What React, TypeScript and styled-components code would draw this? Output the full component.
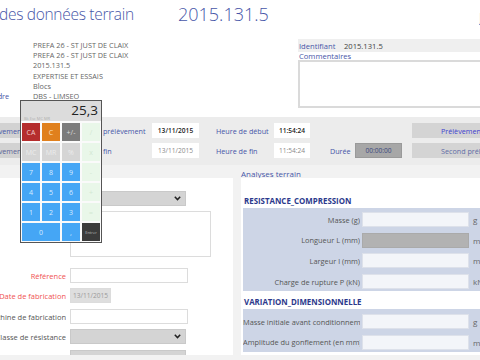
import React from "react";
import styled, { createGlobalStyle } from "styled-components";

const GlobalStyle = createGlobalStyle`
  html, body { margin: 0; padding: 0; background: #fff; }
  body { font-family: "Open Sans", "Noto Sans", sans-serif; }
  * { box-sizing: border-box; }
`;

const BLUE = "#4756a8";
const RED = "#f05252";

const Page = styled.div`
  position: relative;
  width: 480px;
  height: 360px;
  overflow: hidden;
  background: #f2f2f2;
  display: flex;
  flex-direction: column;
`;

const Top = styled.div`
  background: #fff;
  height: 117px;
  display: flex;
  flex-direction: column;
`;

const TitleRow = styled.div`
  height: 36px;
  display: flex;
  align-items: flex-start;
  padding-top: 2px;
  color: ${BLUE};
  font-weight: 300;
  font-size: 18px;
  line-height: 24px;
  white-space: nowrap;
`;

const Title = styled.h1`
  margin: 0 0 0 -1px;
  width: 179px;
  font: inherit;
  font-size: 15.5px;
  letter-spacing: -0.3px;
`;

const TitleNum = styled.span`
  flex: 1;
`;

const Corner = styled.span`
  width: 1px;
  overflow: hidden;
  font-size: 12px;
  padding-top: 4px;
  color: #3b4a9a;
`;

const InfoArea = styled.div`
  flex: 1;
  display: flex;
`;

const InfoLeft = styled.div`
  width: 298px;
  display: grid;
  grid-template-columns: 33px 1fr;
  grid-auto-rows: 10.2px;
  padding-top: 4px;
  font-size: 7.3px;
  line-height: 10.2px;
  color: #666;
  white-space: nowrap;
`;

const InfoLabel = styled.span`
  color: ${BLUE};
  margin-left: -11px;
`;

const InfoRight = styled.div`
  flex: 1;
  padding-top: 3px;
  font-size: 7.6px;
`;

const IdRow = styled.div`
  height: 13px;
  background: #efefef;
  display: flex;
  align-items: center;
`;

const IdLabel = styled.span`
  width: 46px;
  padding-left: 1px;
  color: ${BLUE};
`;

const IdValue = styled.span`
  color: #444;
`;

const CommentLabel = styled.div`
  height: 8px;
  line-height: 8px;
  padding-left: 1px;
  color: ${BLUE};
`;

const CommentBox = styled.div`
  height: 48px;
  margin-right: -10px;
  border: 2px solid #dadada;
  background: #fff;
`;

const Band = styled.div`
  height: 48px;
  background: #ececec;
  padding-top: 6px;
  display: flex;
  flex-direction: column;
  gap: 5px;
`;

const BandRow = styled.div`
  height: 15px;
  display: grid;
  grid-template-columns: 75px 77px 47px 75px 36px 45px 47px 110px;
  align-items: center;
  font-size: 7.2px;
  white-space: nowrap;
`;

const SideButton = styled.div<{ $color: string }>`
  width: 60px;
  height: 15px;
  background: #d2d2d2;
  color: ${(p) => p.$color};
  display: flex;
  align-items: center;
  justify-content: flex-end;
  padding-right: 36px;
  overflow: hidden;
`;

const BandLabel = styled.span<{ $pad?: number }>`
  color: ${BLUE};
  padding-left: ${(p) => p.$pad ?? 0}px;
`;

const ValueBox = styled.div<{ $dim?: boolean; $dark?: boolean }>`
  height: 15px;
  background: ${(p) => (p.$dark ? "#a7a7a7" : "#fff")};
  border: ${(p) => (p.$dark ? "1px solid #9a9a9a" : "none")};
  color: ${(p) => (p.$dark ? "#3b4880" : p.$dim ? "#8a8a8a" : "#1a1a1a")};
  font-weight: ${(p) => (p.$dim || p.$dark ? 400 : 600)};
  display: flex;
  align-items: center;
  justify-content: center;
  font-size: 6.6px;
`;

const RightButton = styled.div<{ $color: string }>`
  height: 15px;
  margin-left: 10px;
  background: #d4d4d4;
  color: ${(p) => p.$color};
  display: flex;
  align-items: center;
  padding-left: 29px;
`;

const Lower = styled.div`
  flex: 1;
  display: grid;
  grid-template-columns: 233px 1fr;
  grid-template-rows: 13px 177px;
  column-gap: 8px;
`;

const PanelTitle = styled.div`
  grid-column: 2;
  grid-row: 1;
  font-size: 8px;
  line-height: 13px;
  padding-top: 2px;
  color: ${BLUE};
`;

const LeftPanel = styled.div`
  grid-column: 1;
  grid-row: 2;
  background: #fff;
  padding-top: 13px;
  display: flex;
  flex-direction: column;
  overflow: hidden;
`;

const FormRow = styled.div<{ $top: number }>`
  display: flex;
  align-items: center;
  margin-top: ${(p) => p.$top}px;
  flex-shrink: 0;
`;

const FieldLabel = styled.span<{ $color?: string }>`
  width: 66px;
  flex-shrink: 0;
  margin-right: 4px;
  text-align: right;
  white-space: nowrap;
  direction: rtl;
  overflow: hidden;
  font-size: 7.5px;
  color: ${(p) => p.$color ?? "#555"};
`;

const Select = styled.div<{ $w: number }>`
  width: ${(p) => p.$w}px;
  flex-shrink: 0;
  height: 15px;
  background: #d4d4d4;
  border: 1px solid #c9c9c9;
  display: flex;
  align-items: center;
  justify-content: flex-end;
  padding-right: 4px;
`;

const Input = styled.div<{ $w: number; $h?: number; $bg?: string }>`
  width: ${(p) => p.$w}px;
  flex-shrink: 0;
  height: ${(p) => p.$h ?? 15}px;
  background: ${(p) => p.$bg ?? "#fff"};
  border: 1px solid #dcdcdc;
  font-size: 6.6px;
  color: #9a9a9a;
  display: flex;
  align-items: center;
  justify-content: center;
`;

const RightPanel = styled.div`
  grid-column: 2;
  grid-row: 2;
  background: #fff;
  padding-left: 2px;
  overflow: hidden;
`;

const SectionTitle = styled.div<{ $h: number }>`
  height: ${(p) => p.$h}px;
  display: flex;
  align-items: flex-end;
  padding: 0 0 1px 1px;
  font-size: 7.9px;
  line-height: 12px;
  font-weight: 700;
  color: #2c3a8c;
`;

const SectionBody = styled.div<{ $pad: number }>`
  background: #cdd5e6;
  padding: ${(p) => p.$pad}px 0 2px;
  display: flex;
  flex-direction: column;
  gap: 5.7px;
`;

const DataRow = styled.div`
  height: 15px;
  display: flex;
  align-items: center;
  white-space: nowrap;
  font-size: 7.4px;
  color: #555;
`;

const DataLabel = styled.span`
  width: 117px;
  flex-shrink: 0;
  text-align: right;
  overflow: hidden;
`;

const DataInput = styled.div<{ $gray?: boolean }>`
  width: 107px;
  flex-shrink: 0;
  height: 15px;
  margin-left: 2px;
  background: ${(p) => (p.$gray ? "#b2b2b2" : "#f3f5f9")};
  border: 1px solid ${(p) => (p.$gray ? "#aaa" : "#dde1ea")};
`;

const Unit = styled.span`
  flex-shrink: 0;
  margin-left: 4px;
  color: #666;
  font-size: 8px;
`;

const Calc = styled.div`
  position: absolute;
  left: 20px;
  top: 100px;
  width: 82px;
  height: 143px;
  border: 1px solid #555;
  background: #fafafa;
`;

const CalcDisplay = styled.div`
  position: relative;
  height: 20px;
  background: #dcdcdc;
  font-size: 13.5px;
  line-height: 19px;
  text-align: right;
  padding-right: 3px;
  color: #222;
`;

const CalcHint = styled.span`
  position: absolute;
  left: 3px;
  bottom: 0px;
  font-size: 4px;
  line-height: 5px;
  color: #b0b0b0;
`;

const KeyGrid = styled.div`
  display: grid;
  grid-template-columns: repeat(4, 18px);
  grid-auto-rows: 18px;
  gap: 2px;
  padding: 2px 1px 1px;
`;

const Key = styled.div<{ $bg: string; $fg: string; $span?: number; $small?: boolean }>`
  grid-column: span ${(p) => p.$span ?? 1};
  background: ${(p) => p.$bg};
  color: ${(p) => p.$fg};
  font-size: ${(p) => (p.$small ? 4 : 7)}px;
  display: flex;
  align-items: center;
  justify-content: center;
`;

const Chevron = () => (
  <svg width="7" height="5" viewBox="0 0 7 5">
    <path d="M0.8 0.8 L3.5 3.6 L6.2 0.8" fill="none" stroke="#222" strokeWidth="1.5" />
  </svg>
);

const KB = "#45a6f5";
const KT = "#d7ebff";
const GR = "#e9f7e9";
const GT = "#d3e8d3";
const MG = "#d5d5d5";

const keys: { t: string; bg: string; fg: string; span?: number; small?: boolean }[] = [
  { t: "CA", bg: "#b52d2d", fg: "#f1c9c9" },
  { t: "C", bg: "#e0801d", fg: "#fbe0c2" },
  { t: "+/-", bg: "#7b7b7b", fg: "#dcdcdc" },
  { t: "/", bg: GR, fg: GT },
  { t: "MC", bg: MG, fg: "#ececec" },
  { t: "MR", bg: MG, fg: "#ececec" },
  { t: "%", bg: MG, fg: "#ececec" },
  { t: "x", bg: GR, fg: GT },
  { t: "7", bg: KB, fg: KT },
  { t: "8", bg: KB, fg: KT },
  { t: "9", bg: KB, fg: KT },
  { t: "-", bg: GR, fg: GT },
  { t: "4", bg: KB, fg: KT },
  { t: "5", bg: KB, fg: KT },
  { t: "6", bg: KB, fg: KT },
  { t: "+", bg: GR, fg: GT },
  { t: "1", bg: KB, fg: KT },
  { t: "2", bg: KB, fg: KT },
  { t: "3", bg: KB, fg: KT },
  { t: "=", bg: GR, fg: GT },
  { t: "0", bg: KB, fg: KT, span: 2 },
  { t: ",", bg: KB, fg: KT },
  { t: "Entrer", bg: "#3b3b3b", fg: "#bdbdbd", small: true },
];

const infoLines = [
  "PREFA 26 - ST JUST DE CLAIX",
  "PREFA 26 - ST JUST DE CLAIX",
  "2015.131.5",
  "EXPERTISE ET ESSAIS",
  "Blocs",
  "DBS - LIMSEO",
];

export default function App() {
  return (
    <>
      <GlobalStyle />
      <Page>
        <Top>
          <TitleRow>
            <Title>des données terrain</Title>
            <TitleNum>2015.131.5</TitleNum>
            <Corner>J</Corner>
          </TitleRow>
          <InfoArea>
            <InfoLeft>
              {infoLines.map((line, i) => (
                <React.Fragment key={i}>
                  <span>{i === infoLines.length - 1 ? <InfoLabel>Cadre</InfoLabel> : null}</span>
                  <span>{line}</span>
                </React.Fragment>
              ))}
            </InfoLeft>
            <InfoRight>
              <IdRow>
                <IdLabel>Identifiant</IdLabel>
                <IdValue>2015.131.5</IdValue>
              </IdRow>
              <CommentLabel>Commentaires</CommentLabel>
              <CommentBox />
            </InfoRight>
          </InfoArea>
        </Top>

        <Band>
          <BandRow>
            <SideButton $color={BLUE}>Prélèvement</SideButton>
            <BandLabel>Date de prélèvement</BandLabel>
            <ValueBox>13/11/2015</ValueBox>
            <BandLabel $pad={17}>Heure de début</BandLabel>
            <ValueBox>11:54:24</ValueBox>
            <span />
            <span />
            <RightButton $color="#3d3fcf">Prélèvement</RightButton>
          </BandRow>
          <BandRow>
            <SideButton $color="#5a6398">Prélèvement</SideButton>
            <BandLabel>Date de fin</BandLabel>
            <ValueBox $dim>13/11/2015</ValueBox>
            <BandLabel $pad={17}>Heure de fin</BandLabel>
            <ValueBox $dim>11:54:24</ValueBox>
            <BandLabel $pad={20}>Durée</BandLabel>
            <ValueBox $dark>00:00:00</ValueBox>
            <RightButton $color="#5f6ca6">Second prélèvement</RightButton>
          </BandRow>
        </Band>

        <Lower>
          <PanelTitle>Analyses terrain</PanelTitle>
          <LeftPanel>
            <FormRow $top={0}>
              <FieldLabel />
              <Select $w={116}>
                <Chevron />
              </Select>
            </FormRow>
            <FormRow $top={5}>
              <FieldLabel />
              <Input $w={141} $h={46} />
            </FormRow>
            <FormRow $top={11}>
              <FieldLabel $color={RED}>Référence</FieldLabel>
              <Input $w={118} />
            </FormRow>
            <FormRow $top={5}>
              <FieldLabel $color={RED}>Date de fabrication</FieldLabel>
              <Input $w={41} $bg="#dedede">13/11/2015</Input>
            </FormRow>
            <FormRow $top={6}>
              <FieldLabel>Machine de fabrication</FieldLabel>
              <Input $w={118} />
            </FormRow>
            <FormRow $top={5}>
              <FieldLabel>Classe de résistance</FieldLabel>
              <Select $w={116}>
                <Chevron />
              </Select>
            </FormRow>
            <FormRow $top={6}>
              <FieldLabel />
              <Select $w={116} />
            </FormRow>
          </LeftPanel>

          <RightPanel>
            <SectionTitle $h={30}>RESISTANCE_COMPRESSION</SectionTitle>
            <SectionBody $pad={4}>
              <DataRow>
                <DataLabel>Masse (g)</DataLabel>
                <DataInput />
                <Unit>g</Unit>
              </DataRow>
              <DataRow>
                <DataLabel>Longueur L (mm)</DataLabel>
                <DataInput $gray />
                <Unit>mm</Unit>
              </DataRow>
              <DataRow>
                <DataLabel>Largeur l (mm)</DataLabel>
                <DataInput />
                <Unit>mm</Unit>
              </DataRow>
              <DataRow>
                <DataLabel>Charge de rupture P (kN)</DataLabel>
                <DataInput />
                <Unit>kN</Unit>
              </DataRow>
            </SectionBody>
            <SectionTitle $h={18}>VARIATION_DIMENSIONNELLE</SectionTitle>
            <SectionBody $pad={5}>
              <DataRow>
                <DataLabel>Masse initiale avant conditionnement (g)</DataLabel>
                <DataInput />
                <Unit>g</Unit>
              </DataRow>
              <DataRow>
                <DataLabel>Amplitude du gonflement (en mm)</DataLabel>
                <DataInput />
                <Unit>mm</Unit>
              </DataRow>
            </SectionBody>
          </RightPanel>
        </Lower>

        <Calc>
          <CalcDisplay>
            25,3
            <CalcHint>Bk Esc MC MR</CalcHint>
          </CalcDisplay>
          <KeyGrid>
            {keys.map((k) => (
              <Key key={k.t} $bg={k.bg} $fg={k.fg} $span={k.span} $small={k.small}>
                {k.t}
              </Key>
            ))}
          </KeyGrid>
        </Calc>
      </Page>
    </>
  );
}
